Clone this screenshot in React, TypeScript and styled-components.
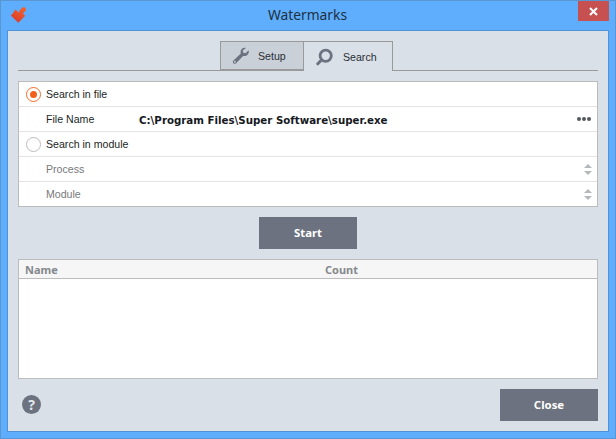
import styled, { createGlobalStyle } from "styled-components";
import { ReactNode } from "react";

const GlobalStyle = createGlobalStyle`
  html, body {
    margin: 0;
    padding: 0;
    background: #5eaefd;
  }
  * {
    box-sizing: border-box;
  }
`;

const Frame = styled.div`
  width: 616px;
  height: 439px;
  display: flex;
  flex-direction: column;
  padding: 0 6px 6px 6px;
  background: #5eaefd;
  border: 1px solid #5a96d2;
  font-family: "Liberation Sans", "Noto Sans", sans-serif;
  font-size: 10.6px;
  color: #1b1f26;
`;

const TitleBar = styled.div`
  height: 29px;
  flex: none;
  display: flex;
  align-items: flex-start;
  justify-content: space-between;
`;

const AppIcon = styled.svg`
  width: 18px;
  height: 18px;
  margin: 5px 0 0 3px;
`;

const Title = styled.div`
  flex: 1;
  margin-left: 9px;
  text-align: center;
  font-family: "Noto Sans", sans-serif;
  font-size: 13.8px;
  line-height: 28px;
  color: #20303f;
`;

const CloseBox = styled.div`
  width: 31px;
  height: 20px;
  background: #c75050;
  display: flex;
  align-items: center;
  justify-content: center;
`;

const Client = styled.div`
  flex: 1;
  display: flex;
  flex-direction: column;
  background: #d9e0e7;
  border: 1px solid #4f93d6;
  padding: 10px;
`;

const TabBar = styled.div`
  height: 30px;
  flex: none;
  display: flex;
  justify-content: center;
  border-bottom: 1px solid #9a9a9a;
  padding-right: 3px;
`;

const Tab = styled.div<{ $active?: boolean }>`
  width: ${(p) => (p.$active ? "89px" : "84px")};
  height: ${(p) => (p.$active ? "30px" : "29px")};
  display: flex;
  align-items: center;
  gap: ${(p) => (p.$active ? "9px" : "8px")};
  padding-left: ${(p) => (p.$active ? "12px" : "11px")};
  background: ${(p) => (p.$active ? "#d9e0e7" : "#c9d0d7")};
  border: 1px solid #9a9a9a;
  border-left-width: ${(p) => (p.$active ? "0" : "1px")};
  border-bottom-width: ${(p) => (p.$active ? "0" : "1px")};
  color: #2a2f36;
`;

const Panel = styled.div`
  margin-top: 10px;
  flex: none;
  background: #fff;
  border: 1px solid #bcbcbc;
`;

const Row = styled.div<{ $first?: boolean }>`
  height: ${(p) => (p.$first ? "24px" : "25px")};
  display: flex;
  align-items: center;
  position: relative;
  padding: 0 8px 0 27px;
  border-top: ${(p) => (p.$first ? "none" : "1px solid #e3e3e3")};
`;

const Radio = styled.span<{ $on?: boolean }>`
  position: absolute;
  left: 7px;
  top: 5px;
  width: 15px;
  height: 15px;
  border-radius: 50%;
  background: #fff;
  border: 1px solid ${(p) => (p.$on ? "#f26b2a" : "#bcbcbc")};
  display: flex;
  align-items: center;
  justify-content: center;

  &::after {
    content: "";
    display: ${(p) => (p.$on ? "block" : "none")};
    width: 7px;
    height: 7px;
    border-radius: 50%;
    background: #f2601e;
  }
`;

const Label = styled.span<{ $muted?: boolean }>`
  width: 93px;
  flex: none;
  white-space: nowrap;
  color: ${(p) => (p.$muted ? "#77797c" : "#1b1f26")};
`;

const PathValue = styled.span`
  flex: 1;
  padding-top: 1px;
  font-family: "DejaVu Sans", sans-serif;
  font-size: 10.25px;
  font-weight: 700;
  color: #16191e;
  white-space: nowrap;
`;

const Dots = styled.div`
  display: flex;
  gap: 1px;
  margin-right: -2px;
`;

const Dot = styled.span`
  width: 4px;
  height: 4px;
  border-radius: 50%;
  background: #55585d;
`;

const Spinner = styled.div`
  margin-left: auto;
  margin-right: -3px;
  display: flex;
  flex-direction: column;
  gap: 3px;
`;

const Arrow = styled.span<{ $down?: boolean }>`
  width: 0;
  height: 0;
  border-left: 4px solid transparent;
  border-right: 4px solid transparent;
  border-bottom: ${(p) => (p.$down ? "none" : "4px solid #b5b8bb")};
  border-top: ${(p) => (p.$down ? "4px solid #b5b8bb" : "none")};
`;

const ActionBar = styled.div`
  height: 52px;
  flex: none;
  display: flex;
  align-items: center;
  justify-content: center;
`;

const Button = styled.button`
  width: 98px;
  height: 32px;
  padding: 0 0 2px 0;
  border: none;
  background: #6c7280;
  color: #fff;
  font-family: "Noto Sans", sans-serif;
  font-size: 11.4px;
  font-weight: 700;
`;

const Table = styled.div`
  flex: 1;
  display: flex;
  flex-direction: column;
  background: #fff;
  border: 1px solid #bcbcbc;
`;

const TableHead = styled.div`
  height: 19px;
  flex: none;
  display: grid;
  grid-template-columns: 300px 1fr;
  align-items: center;
  padding-left: 6px;
  background: #f6f6f6;
  border-bottom: 1px solid #bcbcbc;
  font-family: "Noto Sans", sans-serif;
  font-size: 11px;
  font-weight: 700;
  color: #85888c;
`;

const Footer = styled.div`
  height: 42px;
  flex: none;
  display: flex;
  align-items: flex-end;
  justify-content: space-between;
`;

const HelpIcon = styled.div`
  width: 19px;
  height: 19px;
  margin: 0 0 7px 4px;
  border-radius: 50%;
  background: #6c7280;
  color: #e4e8ec;
  font-family: "Noto Sans", sans-serif;
  font-size: 14px;
  font-weight: 700;
  line-height: 19px;
  text-align: center;
`;

const TabItem = ({ active, icon, children }: { active?: boolean; icon: ReactNode; children: ReactNode }) => (
  <Tab $active={active}>
    {icon}
    <span>{children}</span>
  </Tab>
);

const Updown = () => (
  <Spinner>
    <Arrow />
    <Arrow $down />
  </Spinner>
);

export default function App() {
  return (
    <>
      <GlobalStyle />
      <Frame>
        <TitleBar>
          <AppIcon viewBox="0 0 18 18">
            <defs>
              <linearGradient id="piece" x1="0.8" y1="0" x2="0.3" y2="1">
                <stop offset="0" stopColor="#f4622a" />
                <stop offset="1" stopColor="#d93a2b" />
              </linearGradient>
            </defs>
            <path
              d="M8.3 16.8 L0.8 9.5 L4 6 C3.5 4 6 3 7.2 5 L8.5 6.5 L9.5 6 C9 5 9.5 4.5 10 4 L11.5 2.5 C12 0.8 15 0.8 15.8 2.5 C16.5 4 15.5 5.5 14 6 L13 7.5 L15.2 9.8 Z"
              fill="url(#piece)"
            />
          </AppIcon>
          <Title>Watermarks</Title>
          <CloseBox>
            <svg width="9" height="9" viewBox="0 0 9 9">
              <path d="M1 1 L8 8 M8 1 L1 8" stroke="#fff" strokeWidth="2" />
            </svg>
          </CloseBox>
        </TitleBar>
        <Client>
          <TabBar>
            <TabItem
              icon={
                <svg width="18" height="18" viewBox="0 0 20 20">
                  <path
                    d="M18.5 3.5 L15 7 L12.5 6.5 L12 4 L15.5 1 C12.5 0 9.5 2 9.5 5.5 C9.5 6.2 9.6 6.8 9.8 7.3 L1.6 15 C0.6 16 0.8 17.2 1.6 18 C2.5 18.9 3.7 18.9 4.6 18 L12.3 9.9 C15.5 11 19.5 8 18.5 3.5 Z"
                    fill="#6c7280"
                  />
                  <circle cx="3.2" cy="16.4" r="1" fill="#c9d0d7" />
                </svg>
              }
            >
              Setup
            </TabItem>
            <TabItem
              active
              icon={
                <svg width="18" height="18" viewBox="0 0 18 18">
                  <circle cx="9.7" cy="7.7" r="5.6" fill="none" stroke="#6c7280" strokeWidth="2.8" />
                  <path d="M5.5 12 L1.8 15.8" stroke="#6c7280" strokeWidth="3" strokeLinecap="round" />
                </svg>
              }
            >
              Search
            </TabItem>
          </TabBar>
          <Panel>
            <Row $first>
              <Radio $on />
              <Label>Search in file</Label>
            </Row>
            <Row>
              <Label>File Name</Label>
              <PathValue>C:\Program Files\Super Software\super.exe</PathValue>
              <Dots>
                <Dot />
                <Dot />
                <Dot />
              </Dots>
            </Row>
            <Row>
              <Radio />
              <Label>Search in module</Label>
            </Row>
            <Row>
              <Label $muted>Process</Label>
              <Updown />
            </Row>
            <Row>
              <Label $muted>Module</Label>
              <Updown />
            </Row>
          </Panel>
          <ActionBar>
            <Button>Start</Button>
          </ActionBar>
          <Table>
            <TableHead>
              <span>Name</span>
              <span>Count</span>
            </TableHead>
          </Table>
          <Footer>
            <HelpIcon>?</HelpIcon>
            <Button>Close</Button>
          </Footer>
        </Client>
      </Frame>
    </>
  );
}
